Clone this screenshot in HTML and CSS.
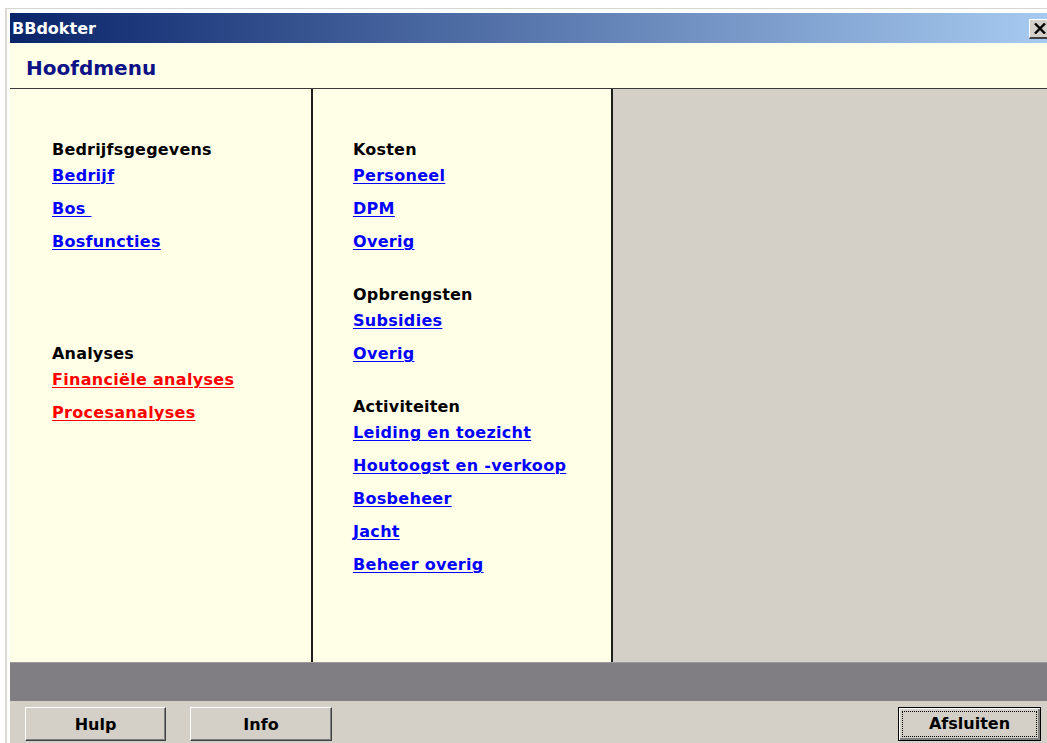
FILE: index.html
```html
<!DOCTYPE html>
<html lang="nl">
<head>
<meta charset="utf-8">
<title>BBdokter</title>
<link rel="stylesheet" href="styles.css">
</head>
<body>
<div class="window">
  <div class="app">
    <div class="titlebar">
      <span class="title">BBdokter</span>
      <span class="close">
        <svg width="12" height="11" viewBox="0 0 12 11"><path d="M1 0.5 L11 10.5 M11 0.5 L1 10.5" stroke="#000" stroke-width="2.4" fill="none"/></svg>
      </span>
    </div>
    <div class="header">Hoofdmenu</div>
    <div class="main">
      <div class="col col-left">
        <div class="group">
          <div class="heading">Bedrijfsgegevens</div>
          <a class="link" href="#">Bedrijf</a>
          <a class="link" href="#">Bos&nbsp;</a>
          <a class="link" href="#">Bosfuncties</a>
        </div>
        <div class="group group-far">
          <div class="heading">Analyses</div>
          <a class="link red" href="#">Financiële analyses</a>
          <a class="link red" href="#">Procesanalyses</a>
        </div>
      </div>
      <div class="col col-mid">
        <div class="group">
          <div class="heading">Kosten</div>
          <a class="link" href="#">Personeel</a>
          <a class="link" href="#">DPM</a>
          <a class="link" href="#">Overig</a>
        </div>
        <div class="group">
          <div class="heading">Opbrengsten</div>
          <a class="link" href="#">Subsidies</a>
          <a class="link" href="#">Overig</a>
        </div>
        <div class="group">
          <div class="heading">Activiteiten</div>
          <a class="link" href="#">Leiding en toezicht</a>
          <a class="link" href="#">Houtoogst en -verkoop</a>
          <a class="link" href="#">Bosbeheer</a>
          <a class="link" href="#">Jacht</a>
          <a class="link" href="#">Beheer overig</a>
        </div>
      </div>
      <div class="col col-right"></div>
    </div>
    <div class="band"></div>
    <div class="footer">
      <button class="btn btn-hulp" type="button">Hulp</button>
      <button class="btn btn-info" type="button">Info</button>
      <button class="btn btn-default" type="button"><span class="focus">Afsluiten</span></button>
    </div>
  </div>
</div>
</body>
</html>
```

FILE: styles.css
```css
html, body {
  margin: 0;
  padding: 0;
  background: #ffffff;
  overflow: hidden;
}

body {
  font-family: "DejaVu Sans", "Liberation Sans", sans-serif;
  font-weight: bold;
  font-size: 16px;
}

.window {
  margin: 8px 0 0 5px;
  border-top: 1px solid #d6d6d6;
  border-left: 2px solid #dedbd6;
  padding: 4px 0 0 3px;
}

.app {
  display: flex;
  flex-direction: column;
  height: 730px;
  width: 1037px;
}

/* caption bar */
.titlebar {
  position: relative;
  height: 30px;
  flex: none;
  background: linear-gradient(to right, #0a246a 0%, #a6caf0 100%);
  color: #ffffff;
  box-sizing: border-box;
  padding: 2px 0 0 2px;
  line-height: 28px;
}

.close {
  position: absolute;
  right: -4px;
  top: 6px;
  width: 22px;
  height: 20px;
  box-sizing: border-box;
  background: #d4d0c8;
  border-top: 1px solid #ffffff;
  border-left: 1px solid #ffffff;
  border-bottom: 2px solid #404040;
  border-right: 1px solid #404040;
  display: flex;
  align-items: center;
  justify-content: center;
}

/* page heading */
.header {
  flex: none;
  box-sizing: border-box;
  background: #ffffe8;
  border-bottom: 1px solid #3a3a3a;
  padding: 5px 0 0 16px;
  font-size: 20px;
  line-height: 40px;
  color: #0c1286;
  height: 46px;
}

.main {
  display: flex;
  height: 573px;
  flex: none;
}

.col {
  box-sizing: border-box;
}

.col-left {
  width: 303px;
  background: #ffffe8;
  border-right: 2px solid #1e1e1e;
  padding: 51px 0 0 42px;
}

.col-mid {
  width: 300px;
  background: #ffffe8;
  border-right: 2px solid #1e1e1e;
  padding: 51px 0 0 40px;
}

.col-right {
  flex: 1;
  background: #d4d0c8;
}

.group {
  display: flex;
  flex-direction: column;
  align-items: flex-start;
  margin-bottom: 27px;
}

.group-far {
  margin-top: 86px;
}

.heading {
  color: #000000;
  line-height: 19px;
  letter-spacing: 0.2px;
}

.link {
  color: #0000ff;
  line-height: 33px;
  letter-spacing: 0.3px;
  text-decoration: underline;
  text-decoration-thickness: 1px;
  text-underline-offset: 2px;
}

.link.red {
  color: #ff0000;
}

/* status strip */
.band {
  height: 39px;
  flex: none;
  background: #807e82;
  border-top: 1px solid #9a989c;
  box-sizing: border-box;
}

.footer {
  flex: 1;
  background: #d4d0c8;
  display: flex;
  align-items: flex-start;
  padding-top: 6px;
  box-sizing: border-box;
}

.btn {
  font-family: inherit;
  font-weight: bold;
  font-size: 16px;
  color: #000000;
  height: 34px;
  background: #d4d0c8;
  border-top: 1px solid #ffffff;
  border-left: 1px solid #ffffff;
  border-bottom: 1px solid #404040;
  border-right: 1px solid #404040;
  box-shadow: inset -1px -1px 0 #808080;
  padding: 0;
  margin: 0;
  box-sizing: border-box;
}

.btn-hulp {
  width: 141px;
  margin-left: 15px;
}

.btn-info {
  width: 142px;
  margin-left: 24px;
}

.btn-default {
  width: 143px;
  margin-left: auto;
  margin-right: 6px;
  border: 1px solid #000000;
  box-shadow: inset 1px 1px 0 #ffffff, inset -2px -2px 0 #808080;
  padding: 3px;
  display: flex;
}

.focus {
  flex: 1;
  border: 1px dotted #000000;
  display: flex;
  align-items: center;
  justify-content: center;
  line-height: 24px;
}
```
